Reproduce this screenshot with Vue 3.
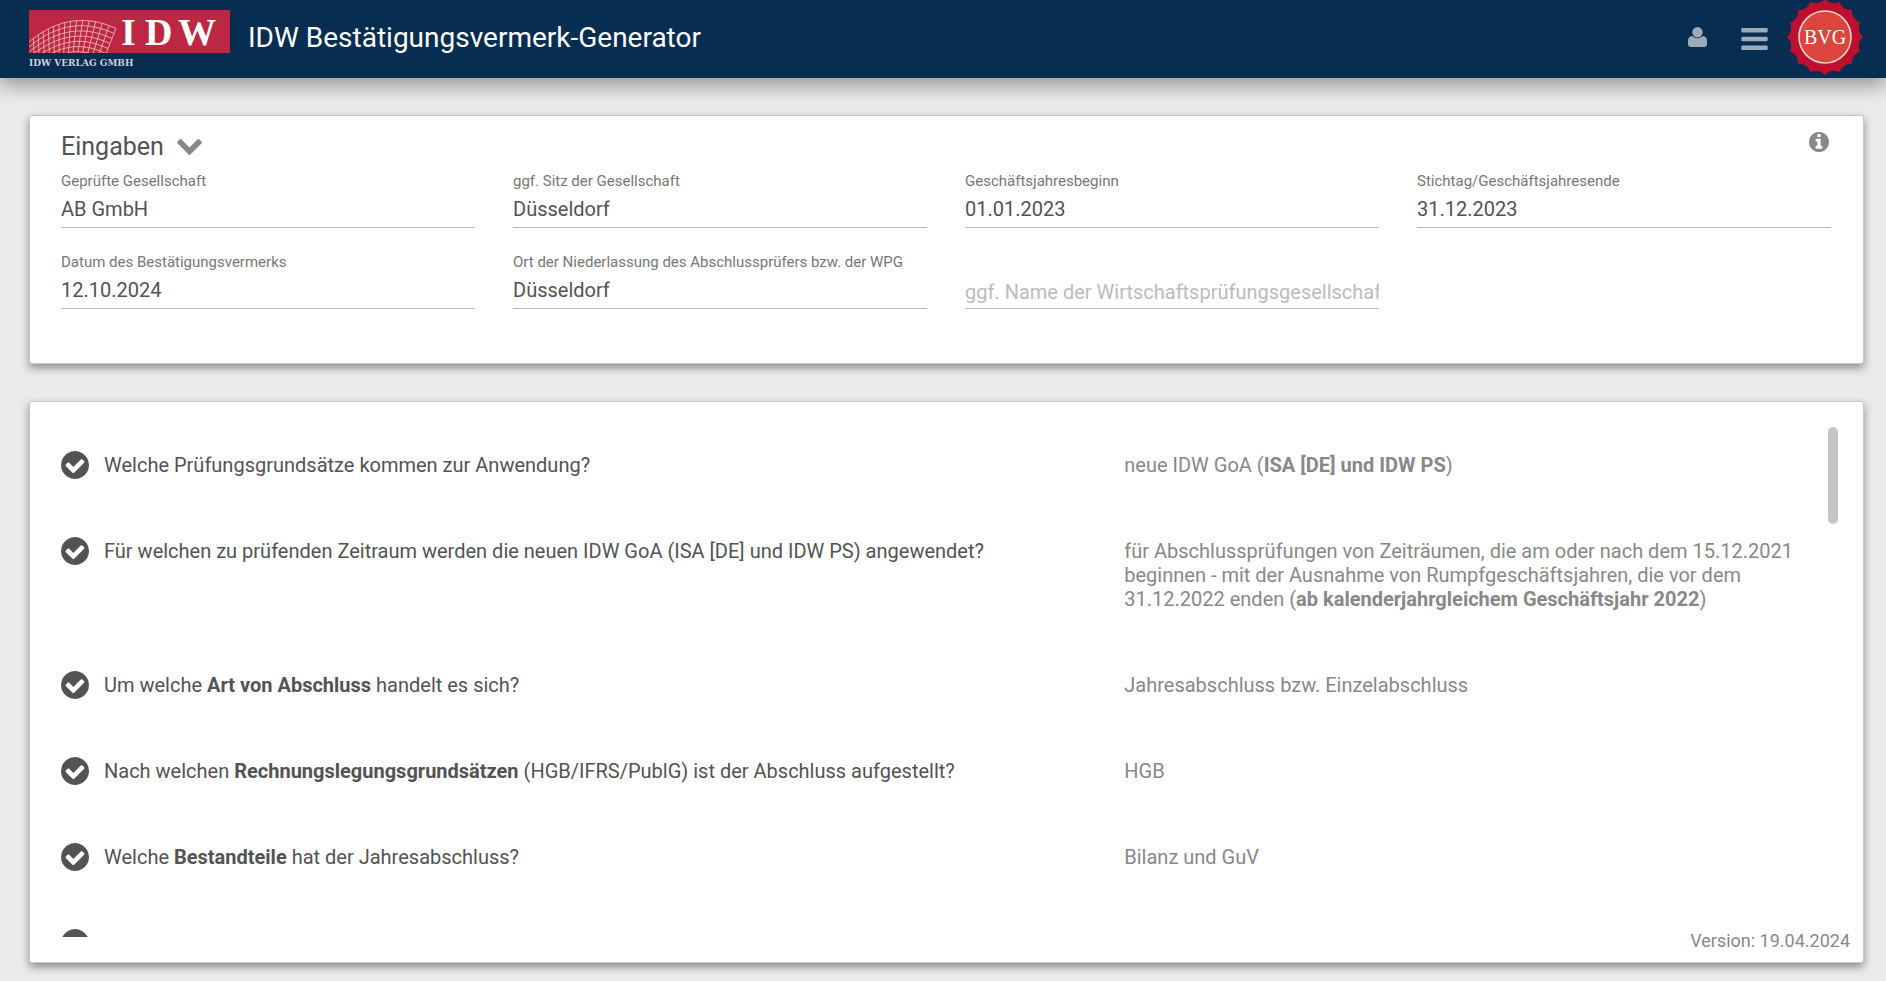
<script setup>
import { ref, computed } from 'vue';

const open = ref(true);

const fields = ref([
  { id: 'gesellschaft', label: 'Geprüfte Gesellschaft', value: 'AB GmbH' },
  { id: 'sitz', label: 'ggf. Sitz der Gesellschaft', value: 'Düsseldorf' },
  { id: 'beginn', label: 'Geschäftsjahresbeginn', value: '01.01.2023' },
  { id: 'ende', label: 'Stichtag/Geschäftsjahresende', value: '31.12.2023' },
  { id: 'datum', label: 'Datum des Bestätigungsvermerks', value: '12.10.2024' },
  { id: 'ort', label: 'Ort der Niederlassung des Abschlussprüfers bzw. der WPG', value: 'Düsseldorf' },
  { id: 'wpg', placeholder: 'ggf. Name der Wirtschaftsprüfungsgesellschaft', value: '' },
]);

/* every text is a list of parts, b marks the bold ones */
const questions = [
  {
    question: [{ t: 'Welche Prüfungsgrundsätze kommen zur Anwendung?' }],
    answer: [{ t: 'neue IDW GoA (' }, { t: 'ISA [DE] und IDW PS', b: true }, { t: ')' }],
  },
  {
    question: [{ t: 'Für welchen zu prüfenden Zeitraum werden die neuen IDW GoA (ISA [DE] und IDW PS) angewendet?' }],
    answer: [
      { t: 'für Abschlussprüfungen von Zeiträumen, die am oder nach dem 15.12.2021 beginnen - mit der Ausnahme von Rumpfgeschäftsjahren, die vor dem 31.12.2022 enden (' },
      { t: 'ab kalenderjahrgleichem Geschäftsjahr 2022', b: true },
      { t: ')' },
    ],
  },
  {
    question: [{ t: 'Um welche ' }, { t: 'Art von Abschluss', b: true }, { t: ' handelt es sich?' }],
    answer: [{ t: 'Jahresabschluss bzw. Einzelabschluss' }],
  },
  {
    question: [{ t: 'Nach welchen ' }, { t: 'Rechnungslegungsgrundsätzen', b: true }, { t: ' (HGB/IFRS/PublG) ist der Abschluss aufgestellt?' }],
    answer: [{ t: 'HGB' }],
  },
  {
    question: [{ t: 'Welche ' }, { t: 'Bestandteile', b: true }, { t: ' hat der Jahresabschluss?' }],
    answer: [{ t: 'Bilanz und GuV' }],
  },
  { question: [], answer: [] },
];

/* Logo mesh */
const arc = (k) => [
  [0, 32 + 5 * k],
  [22 + k, 13 + 5 * k],
  [52 - k, 2 + 5.5 * k],
  [87 - 2 * k, 18.5 + 5 * k],
];
const pointOn = (p, t) => {
  const u = 1 - t;
  return [0, 1].map((i) => u * u * u * p[0][i] + 3 * u * u * t * p[1][i] + 3 * u * t * t * p[2][i] + t * t * t * p[3][i]);
};
const meshPath = computed(() => {
  let path = '';
  for (let k = 0; k < 7; k++) {
    const p = arc(k);
    path += `M${p[0]}C${p[1]} ${p[2]} ${p[3]}`;
  }
  for (let i = 1; i <= 15; i++) {
    path += `M${pointOn(arc(0), i / 15)}L${pointOn(arc(6), i / 15)}`;
  }
  return path;
});

/* Seal with 16 teeth */
const sealPath = computed(() => {
  let path = '';
  for (let i = 0; i < 16; i++) {
    const a = (i * Math.PI) / 8;
    const v = a + Math.PI / 16;
    const n = a + Math.PI / 8;
    path += `${i ? 'L' : 'M'}${38 * Math.cos(a)} ${38 * Math.sin(a)}`;
    path += `Q${32 * Math.cos(v)} ${32 * Math.sin(v)} ${38 * Math.cos(n)} ${38 * Math.sin(n)}`;
  }
  return path + 'Z';
});
</script>

<template>
  <div class="page">
    <header class="topbar">
      <a href="#" class="logo" aria-label="IDW Verlag GmbH">
        <svg width="202" height="58" viewBox="0 0 202 58">
          <clipPath id="logo-clip"><rect width="201" height="43" /></clipPath>
          <rect width="201" height="43" fill="#bd2743" />
          <path :d="meshPath" clip-path="url(#logo-clip)" fill="none" stroke="#efc3ca" stroke-width="0.8" />
          <g class="logo-letters">
            <text x="92" y="35">I</text>
            <text x="116" y="35">D</text>
            <text x="149" y="35">W</text>
          </g>
          <text class="logo-sub" x="0" y="56">IDW VERLAG GMBH</text>
        </svg>
      </a>
      <h1>IDW Bestätigungsvermerk-Generator</h1>
      <nav>
        <button type="button" class="user" aria-label="Benutzer">
          <svg width="19" height="20" viewBox="0 0 19 20" fill="currentColor">
            <circle cx="9.5" cy="5.2" r="5.2" />
            <path d="M4.2 9Q9.5 13.4 14.8 9Q19 9.600 19 14V17Q19 20 16 20H3Q0 20 0 17V14Q0 9.600 4.200 9Z" />
          </svg>
        </button>
        <button type="button" class="menu" aria-label="Menü">
          <svg width="27" height="22" viewBox="128 256 1536 1280" fill="currentColor">
            <path d="M1664 1344v128q0 26-19 45t-45 19h-1408q-26 0-45-19t-19-45v-128q0-26 19-45t45-19h1408q26 0 45 19t19 45zm0-512v128q0 26-19 45t-45 19h-1408q-26 0-45-19t-19-45v-128q0-26 19-45t45-19h1408q26 0 45 19t19 45zm0-512v128q0 26-19 45t-45 19h-1408q-26 0-45-19t-19-45v-128q0-26 19-45t45-19h1408q26 0 45 19t19 45z" />
          </svg>
        </button>
        <svg class="seal" width="76" height="76" viewBox="-38 -38 76 76">
          <path :d="sealPath" fill="#be0f2f" />
          <circle r="26" fill="#dc453e" stroke="#f6d0cc" stroke-width="1.6" />
          <text y="7" text-anchor="middle">BVG</text>
        </svg>
      </nav>
    </header>

    <main>
      <section class="card inputs">
        <div class="inputs-head">
          <button type="button" class="toggle" :aria-expanded="open" @click="open = !open">
            Eingaben
            <svg width="25" height="16" viewBox="90 533 1612 1035" fill="#888">
              <path d="M1683 808l-742 741q-19 19-45 19t-45-19l-742-741q-19-19-19-45.500t19-45.500l166-165q19-19 45-19t45 19l531 531 531-531q19-19 45-19t45 19l166 165q19 19 19 45.500t-19 45.500z" />
            </svg>
          </button>
          <button type="button" class="info" aria-label="Information">
            <svg width="20" height="20" viewBox="128 128 1536 1536" fill="#888">
              <path d="M1152 1376v-160q0-14-9-23t-23-9h-96v-512q0-14-9-23t-23-9h-320q-14 0-23 9t-9 23v160q0 14 9 23t23 9h96v320h-96q-14 0-23 9t-9 23v160q0 14 9 23t23 9h448q14 0 23-9t9-23zm-128-896v-160q0-14-9-23t-23-9h-192q-14 0-23 9t-9 23v160q0 14 9 23t23 9h192q14 0 23-9t9-23zm640 416q0 209-103 385.500t-279.500 279.500-385.500 103-385.500-103-279.500-279.500-103-385.500 103-385.500 279.500-279.500 385.500-103 385.500 103 279.500 279.500 103 385.500z" />
            </svg>
          </button>
        </div>
        <form v-show="open" class="fields" @submit.prevent>
          <div v-for="field in fields" :key="field.id" class="field">
            <label v-if="field.label" :for="field.id">{{ field.label }}</label>
            <input
              :id="field.id"
              v-model="field.value"
              type="text"
              :placeholder="field.placeholder"
              :aria-label="field.placeholder" />
          </div>
        </form>
      </section>

      <section class="card questions">
        <div class="scroller">
          <ul>
            <li v-for="(item, index) in questions" :key="index">
              <svg class="check" width="28" height="28" viewBox="128 128 1536 1536" fill="#535353">
                <path d="M1412 734q0-28-18-46l-91-90q-19-19-45-19t-45 19l-408 407-226-226q-19-19-45-19t-45 19l-91 90q-18 18-18 46 0 27 18 45l362 362q19 19 45 19 27 0 46-19l543-543q18-18 18-45zm252 162q0 209-103 385.500t-279.500 279.500-385.500 103-385.500-103-279.500-279.500-103-385.500 103-385.500 279.500-279.500 385.500-103 385.500 103 279.500 279.500 103 385.500z" />
              </svg>
              <p>
                <template v-for="part in item.question"><b v-if="part.b">{{ part.t }}</b><template v-else>{{ part.t }}</template></template>
              </p>
              <p class="answer">
                <template v-for="part in item.answer"><b v-if="part.b">{{ part.t }}</b><template v-else>{{ part.t }}</template></template>
              </p>
            </li>
          </ul>
          <div class="thumb"></div>
        </div>
        <footer>Version: 19.04.2024</footer>
      </section>
    </main>
  </div>
</template>

<style>
body {
  margin: 0;
  background: #eaeaea;
}
</style>

<style scoped>
* {
  box-sizing: border-box;
}
.page {
  display: flex;
  flex-direction: column;
  height: 100vh;
  font-family: Roboto, 'Liberation Sans', sans-serif;
  font-size: 20px;
  line-height: 24px;
  color: #535353;
}
button {
  padding: 0;
  border: 0;
  background: none;
  font: inherit;
  color: inherit;
  cursor: pointer;
}
svg {
  display: block;
}
.topbar {
  display: flex;
  align-items: center;
  height: 78px;
  flex: none;
  padding: 0 23px 0 29px;
  background: #072d50;
  box-shadow: 0 8px 17px 0 rgba(0, 0, 0, 0.2), 0 6px 20px 0 rgba(0, 0, 0, 0.19);
}
.logo-letters {
  font-family: 'Liberation Serif', serif;
  font-size: 38px;
  font-weight: 700;
  fill: #fff;
}
.logo-sub {
  font-family: 'DejaVu Serif', serif;
  font-size: 9px;
  font-weight: 700;
  fill: #c9d3dc;
}
h1 {
  margin: 0 0 2px 17px;
  font-size: 28px;
  line-height: 32px;
  font-weight: 400;
  color: #fff;
}
nav {
  display: flex;
  align-items: center;
  margin-left: auto;
  color: #9cabb9;
}
.user {
  margin-bottom: 4px;
}
.menu {
  margin: 0 19px 0 34px;
}
.seal {
  margin-bottom: 4px;
}
.seal text {
  font-family: 'Liberation Serif', serif;
  font-size: 20px;
  fill: #fff;
}
main {
  display: flex;
  flex: 1;
  flex-direction: column;
  gap: 37px;
  min-height: 0;
  padding: 37px 22px 18px 29px;
}
.card {
  border: 1px solid #c8c8c8;
  border-radius: 3px;
  background: #fff;
  box-shadow: 0 4px 8px 0 rgba(0, 0, 0, 0.4);
}
.inputs {
  padding: 16px 32px 54px 31px;
}
.inputs-head {
  display: flex;
  justify-content: space-between;
  align-items: flex-start;
  margin-bottom: 10px;
}
.toggle {
  display: flex;
  align-items: center;
  gap: 13px;
  font-size: 25px;
  line-height: 30px;
}
.info {
  margin-right: 2px;
}
.fields {
  display: grid;
  grid-template-columns: repeat(4, minmax(0, 1fr));
  gap: 25px 38px;
}
.field {
  display: flex;
  flex-direction: column;
  justify-content: flex-end;
}
label {
  font-size: 15px;
  line-height: 18px;
  color: #777;
}
input {
  width: 100%;
  height: 38px;
  padding: 0;
  border: 0;
  border-bottom: 1px solid #b8b8b8;
  outline: none;
  background: none;
  font: inherit;
  color: #535353;
}
input:placeholder-shown {
  padding-top: 4px;
}
input::placeholder {
  color: #bbb;
  opacity: 1;
}
.questions {
  position: relative;
  display: flex;
  flex: 1;
  min-height: 0;
  padding: 25px 25px 25px 31px;
}
.scroller {
  display: flex;
  flex: 1;
  min-width: 0;
}
ul {
  flex: 1;
  margin: 0;
  padding: 0;
  overflow: hidden;
  list-style: none;
}
li {
  display: grid;
  grid-template-columns: 28px minmax(0, 10fr) minmax(0, 7fr);
  column-gap: 15px;
  align-items: start;
  padding: 26px 0 36px;
}
.check {
  margin: -2px 0;
}
p {
  margin: 0;
}
.answer {
  color: #888;
}
b {
  font-weight: 700;
}
.thumb {
  flex: none;
  width: 10px;
  height: 19%;
  border-radius: 5px;
  background: #c6c6c6;
}
footer {
  position: absolute;
  right: 13px;
  bottom: 9px;
  font-size: 18px;
  color: #888;
}
</style>
